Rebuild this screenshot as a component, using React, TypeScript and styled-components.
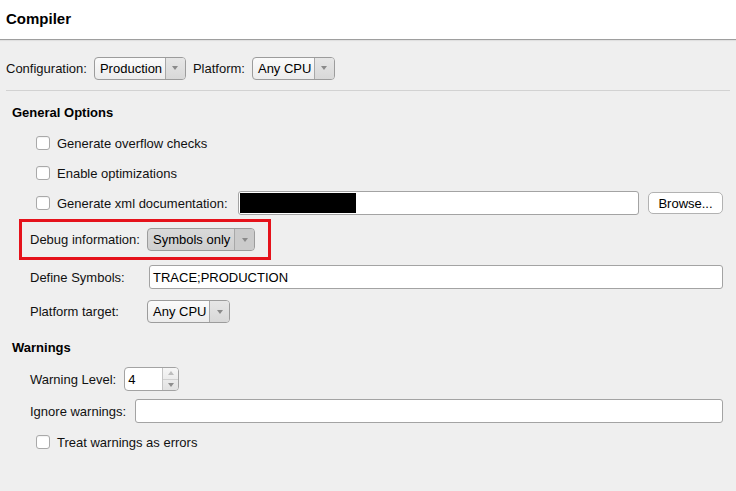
import React from "react";
import styled, { createGlobalStyle, css } from "styled-components";

const Global = createGlobalStyle`
  html, body { margin: 0; padding: 0; background: #efefef; }
  body { font-family: "Liberation Sans", Arial, sans-serif; font-size: 13px; color: #111; }
  * { box-sizing: border-box; }
`;

const Page = styled.div`
  width: 736px;
  height: 491px;
  background: #efefef;
  display: flex;
  flex-direction: column;
`;

const Header = styled.div`
  height: 40px;
  background: #fff;
  border-bottom: 1px solid #9e9e9e;
  box-shadow: 0 1px 1px rgba(0,0,0,0.06);
  display: flex;
  align-items: center;
  padding-left: 6px;
  padding-bottom: 3px;
  font-size: 15px;
  font-weight: bold;
  color: #000;
`;

const ConfigBar = styled.div`
  height: 50px;
  display: flex;
  align-items: center;
  gap: 7px;
  padding: 6px 6px 0;
`;

const Separator = styled.div`
  height: 1px;
  background: #d2d2d2;
  margin: 0 6px;
`;

const SectionTitle = styled.div<{ $top: number }>`
  height: 24px;
  margin-top: ${(p) => p.$top}px;
  padding-left: 12px;
  display: flex;
  align-items: center;
  font-weight: bold;
  color: #000;
`;

const Row = styled.div<{ $h: number; $pad?: number; $gap?: number; $top?: number }>`
  height: ${(p) => p.$h}px;
  margin-top: ${(p) => p.$top ?? 0}px;
  display: flex;
  align-items: center;
  padding-left: ${(p) => p.$pad ?? 30}px;
  padding-right: 13px;
  gap: ${(p) => p.$gap ?? 0}px;
`;

const Label = styled.span<{ $w?: number }>`
  white-space: nowrap;
  ${(p) => p.$w && css`width: ${p.$w}px; flex: none;`}
`;

const CheckRow = styled.label`
  display: flex;
  align-items: center;
  gap: 7px;
  white-space: nowrap;
`;

const Box = styled.span`
  width: 14px;
  height: 14px;
  flex: none;
  background: #fff;
  border: 1px solid #a9a9a9;
  border-radius: 3px;
  box-shadow: inset 0 1px 1px rgba(0,0,0,0.05);
`;

const Select = styled.div<{ $w: number; $pressed?: boolean }>`
  width: ${(p) => p.$w}px;
  height: 23px;
  flex: none;
  display: flex;
  border: 1px solid #9c9c9c;
  border-radius: 4px;
  background: ${(p) =>
    p.$pressed
      ? "linear-gradient(#d9d9d9, #cfcfcf)"
      : "linear-gradient(#fbfbfb, #ececec)"};
  overflow: hidden;
  color: #000;
`;

const SelectText = styled.span`
  flex: 1;
  display: flex;
  align-items: center;
  padding-left: 5px;
  white-space: nowrap;
`;

const SelectArrow = styled.span<{ $pressed?: boolean }>`
  width: 20px;
  flex: none;
  border-left: 1px solid #a8a8a8;
  background: ${(p) => (p.$pressed ? "#cbcbcb" : "linear-gradient(#e6e6e6, #d8d8d8)")};
  display: flex;
  align-items: center;
  justify-content: center;
  &::after {
    content: "";
    border-left: 3px solid transparent;
    border-right: 3px solid transparent;
    border-top: 4px solid #8a8a8a;
  }
`;

const TextInput = styled.div<{ $w?: number; $ml?: number }>`
  height: 24px;
  ${(p) => (p.$w ? css`width: ${p.$w}px; flex: none;` : css`flex: 1;`)}
  margin-left: ${(p) => p.$ml ?? 0}px;
  background: #fff;
  border: 1px solid #a3a3a3;
  border-radius: 3px;
  display: flex;
  align-items: center;
  padding-left: 3px;
  color: #000;
  white-space: nowrap;
`;

const Redacted = styled.span`
  width: 116px;
  height: 20px;
  margin-left: -2px;
  background: #000;
`;

const Button = styled.div`
  width: 75px;
  height: 22px;
  flex: none;
  margin-left: 9px;
  background: #fff;
  border: 1px solid #b2b2b2;
  border-radius: 5px;
  display: flex;
  align-items: center;
  justify-content: center;
  color: #000;
`;

const Highlight = styled.div`
  height: 41px;
  width: 252px;
  margin-left: 19px;
  border: 3px solid #e5121b;
  display: flex;
  align-items: center;
  padding-left: 8px;
`;

const Spinner = styled.div`
  width: 55px;
  height: 24px;
  flex: none;
  display: flex;
  border: 1px solid #a3a3a3;
  border-radius: 4px;
  overflow: hidden;
  background: #fff;
`;

const SpinValue = styled.span`
  flex: 1;
  display: flex;
  align-items: center;
  padding-left: 3px;
  color: #000;
`;

const SpinSteps = styled.span`
  width: 16px;
  flex: none;
  border-left: 1px solid #c4c4c4;
  background: linear-gradient(#f6f6f6, #e2e2e2);
  display: flex;
  flex-direction: column;
`;

const Step = styled.span<{ $down?: boolean }>`
  flex: 1;
  display: flex;
  align-items: center;
  justify-content: center;
  ${(p) => p.$down && css`border-top: 1px solid #d0d0d0;`}
  &::after {
    content: "";
    border-left: 3px solid transparent;
    border-right: 3px solid transparent;
    ${(p) =>
      p.$down
        ? css`border-top: 4px solid #8e8e8e;`
        : css`border-bottom: 4px solid #bdbdbd;`}
  }
`;

const Dropdown = ({ w, value, pressed }: { w: number; value: string; pressed?: boolean }) => (
  <Select $w={w} $pressed={pressed}>
    <SelectText>{value}</SelectText>
    <SelectArrow $pressed={pressed} />
  </Select>
);

const Check = ({ label }: { label: string }) => (
  <CheckRow>
    <Box />
    {label}
  </CheckRow>
);

export default function App() {
  return (
    <Page>
      <Global />
      <Header>Compiler</Header>
      <ConfigBar>
        <Label>Configuration:</Label>
        <Dropdown w={92} value="Production" />
        <Label>Platform:</Label>
        <Dropdown w={83} value="Any CPU" />
      </ConfigBar>
      <Separator />

      <SectionTitle $top={9}>General Options</SectionTitle>
      <Row $h={30} $pad={36} $top={4}>
        <Check label="Generate overflow checks" />
      </Row>
      <Row $h={30} $pad={36}>
        <Check label="Enable optimizations" />
      </Row>
      <Row $h={30} $pad={36}>
        <Check label="Generate xml documentation:" />
        <TextInput $ml={10}>
          <Redacted />
        </TextInput>
        <Button>Browse...</Button>
      </Row>
      <Row $h={41} $pad={0} $top={1}>
        <Highlight>
          <Label $w={117}>Debug information:</Label>
          <Dropdown w={108} value="Symbols only" pressed />
        </Highlight>
      </Row>
      <Row $h={34}>
        <Label $w={117}>Define Symbols:</Label>
        <TextInput $ml={2}>TRACE;PRODUCTION</TextInput>
      </Row>
      <Row $h={35}>
        <Label $w={117}>Platform target:</Label>
        <Dropdown w={83} value="Any CPU" />
      </Row>

      <SectionTitle $top={6}>Warnings</SectionTitle>
      <Row $h={28} $gap={8} $top={6}>
        <Label>Warning Level:</Label>
        <Spinner>
          <SpinValue>4</SpinValue>
          <SpinSteps>
            <Step />
            <Step $down />
          </SpinSteps>
        </Spinner>
      </Row>
      <Row $h={36} $gap={9}>
        <Label>Ignore warnings:</Label>
        <TextInput />
      </Row>
      <Row $h={26} $pad={36}>
        <Check label="Treat warnings as errors" />
      </Row>
    </Page>
  );
}
